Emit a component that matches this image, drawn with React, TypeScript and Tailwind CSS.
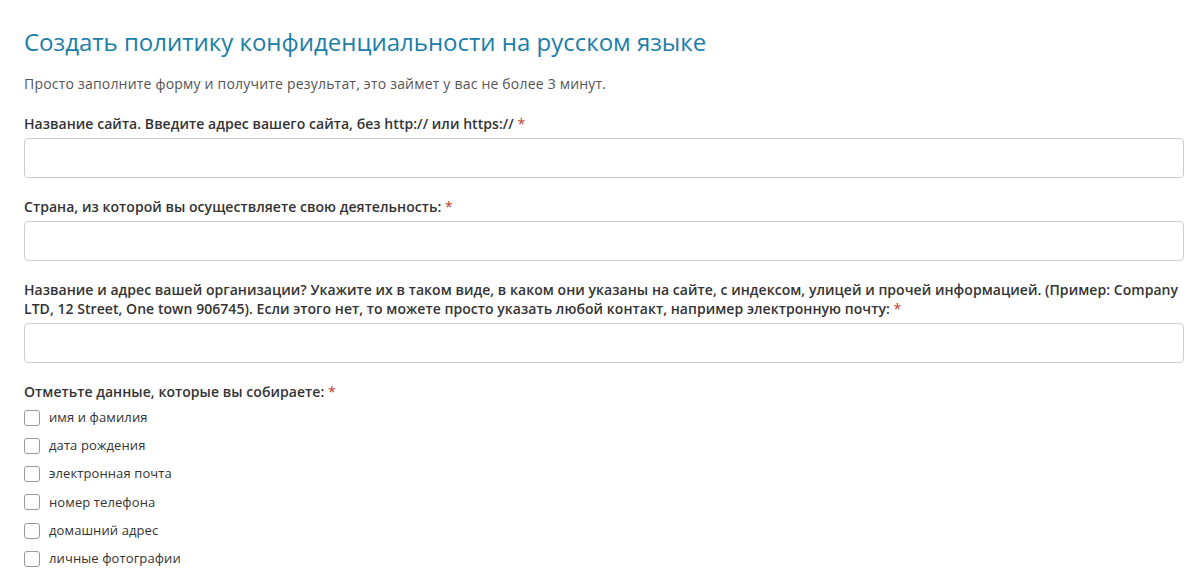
export default function App() {
  const items = [
    "имя и фамилия",
    "дата рождения",
    "электронная почта",
    "номер телефона",
    "домашний адрес",
    "личные фотографии",
  ];

  const Req = () => <span className="text-[#c0392b] font-normal"> *</span>;

  return (
    <div className="bg-white min-h-screen pl-[24px] pr-[19px] pt-[26px] text-[#333] font-['Open_Sans',sans-serif]">
      <h1 className="text-[24px] leading-[32px] text-[#1b7ea8] font-normal">
        Создать политику конфиденциальности на русском языке
      </h1>
      <p className="mt-[16px] text-[14px] leading-[20px] text-[#555] tracking-[0.2px]">
        Просто заполните форму и получите результат, это займет у вас не более 3 минут.
      </p>

      <div className="mt-[20px]">
        <label className="block text-[14px] leading-[19px] font-semibold mb-[5px] tracking-[0.05px]">
          Название сайта. Введите адрес вашего сайта, без http:// или https://<Req />
        </label>
        <input type="text" className="block w-full h-[40px] border border-[#ccc] rounded-[4px] px-3 outline-none" />
      </div>

      <div className="mt-[19px]">
        <label className="block text-[14px] leading-[19px] font-semibold mb-[5px] tracking-[0.05px]">
          Страна, из которой вы осуществляете свою деятельность:<Req />
        </label>
        <input type="text" className="block w-full h-[40px] border border-[#ccc] rounded-[4px] px-3 outline-none" />
      </div>

      <div className="mt-[19px]">
        <label className="block text-[14px] leading-[19px] font-semibold mb-[5px] tracking-[0.05px]">
          Название и адрес вашей организации? Укажите их в таком виде, в каком они указаны на сайте, с индексом, улицей и прочей информацией. (Пример: Company LTD, 12 Street, One town 906745). Если этого нет, то можете просто указать любой контакт, например электронную почту:<Req />
        </label>
        <input type="text" className="block w-full h-[40px] border border-[#ccc] rounded-[4px] px-3 outline-none" />
      </div>

      <div className="mt-[19px]">
        <div className="text-[14px] leading-[19px] font-semibold tracking-[0.05px]">
          Отметьте данные, которые вы собираете:<Req />
        </div>
        <div className="mt-[7px] flex flex-col gap-[9.3px]">
          {items.map(item => (
            <label key={item} className="flex items-center h-[19px] text-[13px] text-[#333] tracking-[0.1px]">
              <span className="w-[16px] h-[16px] border border-[#999] rounded-[3px] bg-white mr-[9px] shrink-0" />
              {item}
            </label>
          ))}
        </div>
      </div>
    </div>
  );
}
